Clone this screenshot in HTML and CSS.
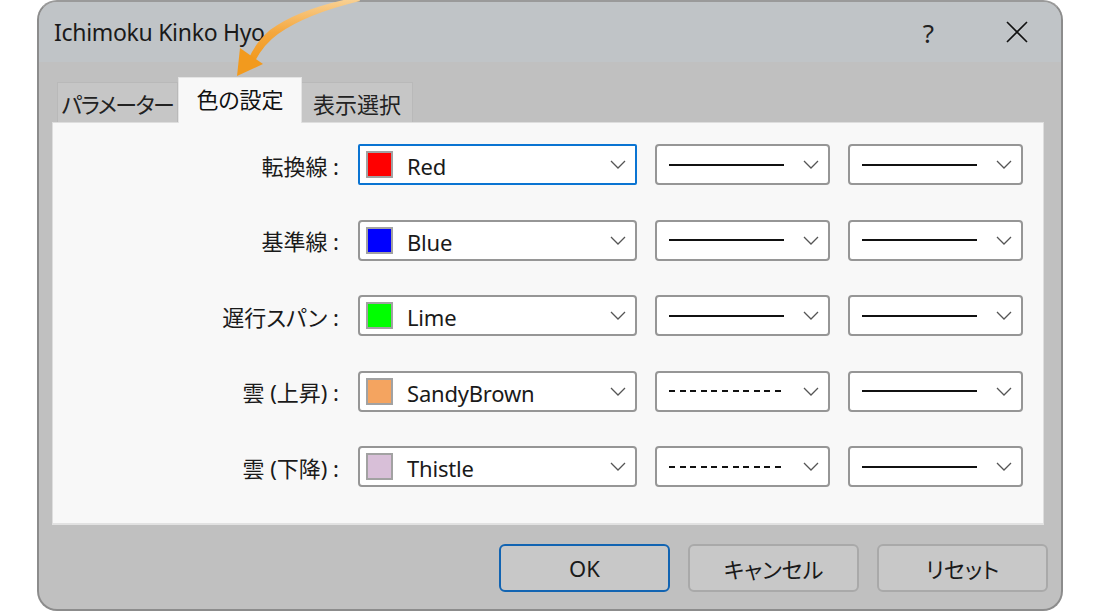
FILE: index.html
```html
<!DOCTYPE html>
<html lang="ja">
<head>
<meta charset="UTF-8">
<title>Ichimoku Kinko Hyo</title>
<link rel="stylesheet" href="styles.css">
</head>
<body>

<div class="dialog">
    <div class="titlebar">
        <span class="title">Ichimoku Kinko Hyo</span>
        <div class="title-actions">
            <span class="help">?</span>
            <svg class="close" width="22" height="22" viewBox="0 0 22 22">
                <path d="M1 1 L21 21 M21 1 L1 21" stroke="#111" stroke-width="1.6" fill="none"/>
            </svg>
        </div>
    </div>

    <div class="dialog-body">
        <div class="tabs">
            <div class="tab kana">パラメーター</div>
            <div class="tab active">色の設定</div>
            <div class="tab">表示選択</div>
        </div>

        <div class="panel">
            <div class="row">
                <span class="row-label">転換線 :</span>
                <div class="combo focused">
                    <span class="swatch red"></span><span class="combo-text">Red</span>
                    <svg class="chevron" width="16" height="9" viewBox="0 0 16 9"><polyline points="1,1 8,8 15,1" fill="none" stroke="#555" stroke-width="1.3"/></svg>
                </div>
                <div class="combo line-combo">
                    <span class="line solid"></span>
                    <svg class="chevron" width="16" height="9" viewBox="0 0 16 9"><polyline points="1,1 8,8 15,1" fill="none" stroke="#555" stroke-width="1.3"/></svg>
                </div>
                <div class="combo line-combo">
                    <span class="line solid"></span>
                    <svg class="chevron" width="16" height="9" viewBox="0 0 16 9"><polyline points="1,1 8,8 15,1" fill="none" stroke="#555" stroke-width="1.3"/></svg>
                </div>
            </div>

            <div class="row">
                <span class="row-label">基準線 :</span>
                <div class="combo">
                    <span class="swatch blue"></span><span class="combo-text">Blue</span>
                    <svg class="chevron" width="16" height="9" viewBox="0 0 16 9"><polyline points="1,1 8,8 15,1" fill="none" stroke="#555" stroke-width="1.3"/></svg>
                </div>
                <div class="combo line-combo">
                    <span class="line solid"></span>
                    <svg class="chevron" width="16" height="9" viewBox="0 0 16 9"><polyline points="1,1 8,8 15,1" fill="none" stroke="#555" stroke-width="1.3"/></svg>
                </div>
                <div class="combo line-combo">
                    <span class="line solid"></span>
                    <svg class="chevron" width="16" height="9" viewBox="0 0 16 9"><polyline points="1,1 8,8 15,1" fill="none" stroke="#555" stroke-width="1.3"/></svg>
                </div>
            </div>

            <div class="row">
                <span class="row-label">遅行スパン :</span>
                <div class="combo">
                    <span class="swatch lime"></span><span class="combo-text">Lime</span>
                    <svg class="chevron" width="16" height="9" viewBox="0 0 16 9"><polyline points="1,1 8,8 15,1" fill="none" stroke="#555" stroke-width="1.3"/></svg>
                </div>
                <div class="combo line-combo">
                    <span class="line solid"></span>
                    <svg class="chevron" width="16" height="9" viewBox="0 0 16 9"><polyline points="1,1 8,8 15,1" fill="none" stroke="#555" stroke-width="1.3"/></svg>
                </div>
                <div class="combo line-combo">
                    <span class="line solid"></span>
                    <svg class="chevron" width="16" height="9" viewBox="0 0 16 9"><polyline points="1,1 8,8 15,1" fill="none" stroke="#555" stroke-width="1.3"/></svg>
                </div>
            </div>

            <div class="row">
                <span class="row-label">雲 (上昇) :</span>
                <div class="combo">
                    <span class="swatch sandy"></span><span class="combo-text">SandyBrown</span>
                    <svg class="chevron" width="16" height="9" viewBox="0 0 16 9"><polyline points="1,1 8,8 15,1" fill="none" stroke="#555" stroke-width="1.3"/></svg>
                </div>
                <div class="combo line-combo">
                    <span class="line dashed"></span>
                    <svg class="chevron" width="16" height="9" viewBox="0 0 16 9"><polyline points="1,1 8,8 15,1" fill="none" stroke="#555" stroke-width="1.3"/></svg>
                </div>
                <div class="combo line-combo">
                    <span class="line solid"></span>
                    <svg class="chevron" width="16" height="9" viewBox="0 0 16 9"><polyline points="1,1 8,8 15,1" fill="none" stroke="#555" stroke-width="1.3"/></svg>
                </div>
            </div>

            <div class="row">
                <span class="row-label">雲 (下降) :</span>
                <div class="combo">
                    <span class="swatch thistle"></span><span class="combo-text">Thistle</span>
                    <svg class="chevron" width="16" height="9" viewBox="0 0 16 9"><polyline points="1,1 8,8 15,1" fill="none" stroke="#555" stroke-width="1.3"/></svg>
                </div>
                <div class="combo line-combo">
                    <span class="line dashed"></span>
                    <svg class="chevron" width="16" height="9" viewBox="0 0 16 9"><polyline points="1,1 8,8 15,1" fill="none" stroke="#555" stroke-width="1.3"/></svg>
                </div>
                <div class="combo line-combo">
                    <span class="line solid"></span>
                    <svg class="chevron" width="16" height="9" viewBox="0 0 16 9"><polyline points="1,1 8,8 15,1" fill="none" stroke="#555" stroke-width="1.3"/></svg>
                </div>
            </div>
        </div>

        <div class="buttons">
            <button class="btn default">OK</button>
            <button class="btn">キャンセル</button>
            <button class="btn">リセット</button>
        </div>
    </div>
</div>

<!-- annotation arrow pointing at the active tab -->
<svg class="pointer-arrow" width="400" height="90" viewBox="0 0 400 90">
    <defs>
        <linearGradient id="arrowFill" x1="0" y1="0" x2="0" y2="1">
            <stop offset="0" stop-color="#f9d49a"/>
            <stop offset="0.55" stop-color="#f4a73e"/>
            <stop offset="1" stop-color="#f29a1e"/>
        </linearGradient>
    </defs>
    <path d="M358 -3 Q 300 8 270 30 Q 256 42 249 58 L 255 61 Q 264 44 278 34 Q 306 14 360 1 Z" fill="url(#arrowFill)"/>
    <polygon points="237,76 240,48 263,64" fill="#f29a1e"/>
</svg>

</body>
</html>
```

FILE: styles.css
```css
body {
    margin: 0;
    background: #ffffff;
    font-family: "Noto Sans", "Noto Sans CJK JP", sans-serif;
    font-feature-settings: "palt";
    color: #1a1a1a;
}
.dialog {
    margin-left: 37px;
    width: 1026px;
    height: 611px;
    box-sizing: border-box;
    border: 2px solid #8c8c8c;
    border-top-color: #9a9a9a;
    border-radius: 20px;
    overflow: hidden;
    background: #c0c0c0;
    display: flex;
    flex-direction: column;
}
.titlebar {
    height: 60px;
    background: #c0c4c7;
    display: flex;
    align-items: center;
    justify-content: space-between;
    padding: 0 33px 0 15px;
}
.title {
    font-size: 23px;
    letter-spacing: -0.3px;
}
.title-actions {
    display: flex;
    align-items: center;
    gap: 72px;
}
.help {
    font-size: 26px;
    line-height: 1;
    margin-top: 2px;
    color: #222;
}
.close {
    display: block;
}
.dialog-body {
    flex: 1;
    padding-top: 15px;
}
.tabs {
    display: flex;
    align-items: flex-end;
    padding-left: 18px;
    height: 45px;
}
.tab {
    height: 40px;
    box-sizing: border-box;
    display: flex;
    align-items: center;
    justify-content: center;
    font-size: 22px;
    background: #c6c6c6;
    border: 1px solid #b9b9b9;
    border-bottom: none;
    color: #222;
}
.tab.kana {
    width: 121px;
    letter-spacing: -1.5px;
}
.tab:last-child {
    width: 111px;
    border-left: none;
}
.tab.active {
    width: 124px;
    height: 46px;
    margin-bottom: -1px;
    background: #f8f8f8;
    border: 1px solid #e4e4e4;
    border-bottom: none;
    position: relative;
    z-index: 1;
    padding-bottom: 6px;
    color: #111;
}
.panel {
    margin: 0 17px 0 13px;
    height: 403px;
    box-sizing: border-box;
    background: #f8f8f8;
    border: 1px solid #dedede;
    border-bottom: 2px solid #e2e2e2;
    padding-top: 21px;
    display: flex;
    flex-direction: column;
    gap: 34.5px;
}
.row {
    display: grid;
    grid-template-columns: 287px 279px 175px 175px;
    column-gap: 18px;
    height: 41px;
    align-items: center;
}
.row-label {
    text-align: right;
    font-size: 22px;
    padding-right: 1px;
}
.combo {
    height: 41px;
    box-sizing: border-box;
    background: #ffffff;
    border: 2px solid #969696;
    border-radius: 4px;
    display: flex;
    align-items: center;
    padding: 0 9px 0 6px;
}
.combo.focused {
    border-color: #0a74d2;
    border-radius: 2px;
}
.swatch {
    width: 27px;
    height: 27px;
    box-sizing: border-box;
    border: 2px solid #a2a2a2;
    flex-shrink: 0;
}
.red { background: #ff0000; }
.blue { background: #0000ff; }
.lime { background: #00ff00; }
.sandy { background: #f4a460; }
.thistle { background: #d8bfd8; }
.combo-text {
    font-size: 22px;
    margin-left: 14px;
    margin-top: 3px;
    flex: 1;
    letter-spacing: -0.2px;
}
.chevron {
    display: block;
    flex-shrink: 0;
    margin-left: auto;
}
.line-combo {
    padding-left: 12px;
}
.line {
    width: 115px;
    height: 2px;
}
.line.solid {
    background: #111;
}
.line.dashed {
    background: repeating-linear-gradient(90deg, #111 0 6px, transparent 6px 10.6px);
}
.buttons {
    display: flex;
    justify-content: flex-end;
    gap: 18px;
    padding-right: 13px;
    margin-top: 19px;
}
.btn {
    width: 171px;
    height: 48px;
    background: #c8c8c8;
    border: 2px solid #a9a9a9;
    border-radius: 6px;
    font-family: "Noto Sans", "Noto Sans CJK JP", sans-serif;
    font-feature-settings: "palt";
    font-size: 22px;
    color: #1a1a1a;
    padding: 0;
}
.btn.default {
    border-color: #1264b2;
}
.pointer-arrow {
    position: absolute;
    left: 0;
    top: 0;
    pointer-events: none;
}
```
